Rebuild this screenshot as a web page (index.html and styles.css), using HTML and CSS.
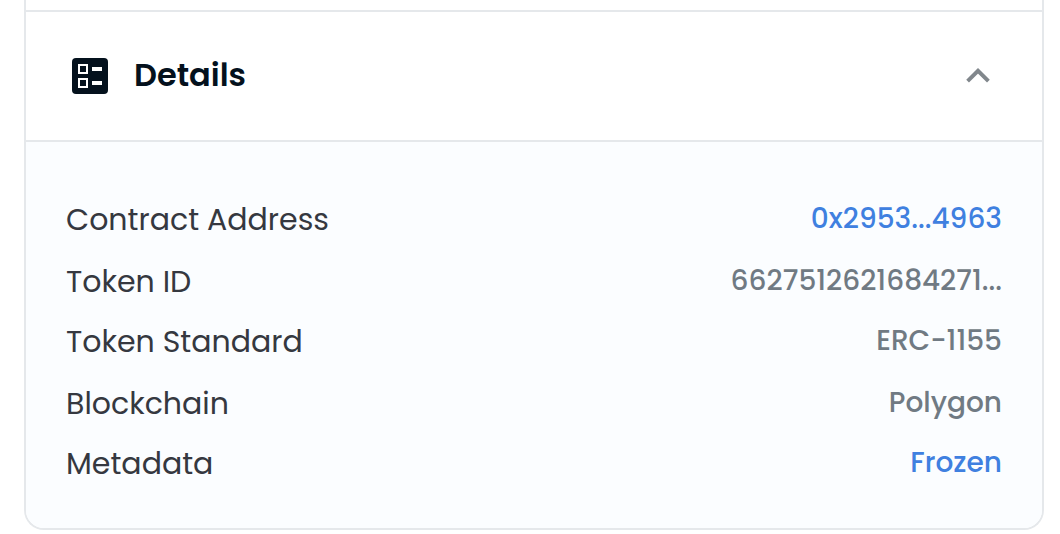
FILE: index.html
```html
<!DOCTYPE html>
<html lang="en">
<head>
<meta charset="utf-8">
<title>Details</title>
<link rel="stylesheet" href="styles.css">
</head>
<body>
<section class="panel">
  <header class="panel-header">
    <svg class="icon" width="36" height="36" viewBox="0 0 36 36">
      <rect width="36" height="36" rx="4" fill="#04111d"/>
      <path d="M7 7h8v8H7zM7 21h8v8H7z" fill="none" stroke="#fff" stroke-width="2"/>
      <path d="M20 9h10v4H20zM20 23h10v4H20z" fill="#fff"/>
    </svg>
    <h2 class="title">Details</h2>
    <svg class="chevron" width="24" height="16" viewBox="0 0 24 16">
      <path d="M1.6 13.1 12 2.8 22.4 13.1" fill="none" stroke="#81878c" stroke-width="3.9"/>
    </svg>
  </header>
  <dl class="rows">
    <div class="row"><dt>Contract Address</dt><dd class="link">0x2953...4963</dd></div>
    <div class="row"><dt>Token ID</dt><dd>6627512621684271...</dd></div>
    <div class="row"><dt>Token Standard</dt><dd>ERC-1155</dd></div>
    <div class="row"><dt>Blockchain</dt><dd>Polygon</dd></div>
    <div class="row"><dt>Metadata</dt><dd class="link">Frozen</dd></div>
  </dl>
</section>
</body>
</html>
```
FILE: styles.css
```css
* { box-sizing: border-box; }
body { margin: 0; background: #fff; font-family: Poppins, Inter, sans-serif; overflow: hidden; }
.panel {
  width: 1020px;
  height: 530px;
  margin-left: 24px;
  padding-top: 10px;
  border: 2px solid #e5e8eb;
  border-top: 0;
  border-radius: 0 0 20px 20px;
  overflow: hidden;
}
.panel-header {
  display: flex;
  align-items: center;
  height: 132px;
  padding: 0 52px 0 46px;
  border-top: 2px solid #e5e8eb;
  border-bottom: 2px solid #e5e8eb;
}
.title {
  flex: 1;
  margin: 0 0 3px 26px;
  font-size: 32px;
  font-weight: 600;
  line-height: 125px;
  color: #04111d;
}
.chevron { display: block; }
.rows {
  display: grid;
  grid-template-rows: 62px 60px 62px 60px 60px;
  height: 386px;
  margin: 0;
  padding: 48px 40px 0;
  background: #fbfdff;
}
.row { display: flex; justify-content: space-between; align-items: flex-start; white-space: nowrap; }
dt { font-size: 30px; line-height: 60px; color: #353840; }
dd { margin: 0; font-size: 28px; font-weight: 500; line-height: 58px; color: #707a83; }
.link { color: #3f80e0; }
```
